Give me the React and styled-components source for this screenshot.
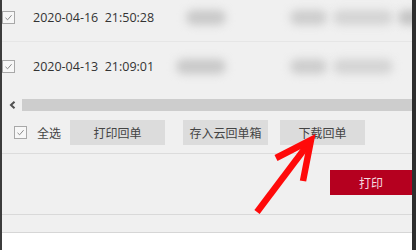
import styled, { createGlobalStyle } from 'styled-components';

const GlobalStyle = createGlobalStyle`
  html, body { margin: 0; padding: 0; background: #ffffff; }
  body { font-family: 'Noto Sans', 'Noto Sans CJK SC', sans-serif; }
`;

const Frame = styled.div`
  position: relative;
  width: 416px;
  height: 250px;
  box-sizing: border-box;
  border-left: 2px solid #3c3c3c;
  border-right: 4px solid #2e2e2e;
  background: #f0f0f0;
  display: flex;
  flex-direction: column;
  overflow: hidden;
`;

const Table = styled.div`
  margin-top: -6px;
  display: flex;
  flex-direction: column;
`;

const Row = styled.div`
  height: 48px;
  display: flex;
  align-items: center;
  border-bottom: ${(p) => (p.$last ? 'none' : '1px solid #e6e6e6')};
  box-sizing: border-box;
`;

const Check = styled.span`
  width: 11px;
  height: 11px;
  border: 1px solid #a8a8a8;
  background: #f7f7f7;
  display: inline-flex;
  align-items: center;
  justify-content: center;
  flex: none;
`;

const DateText = styled.span`
  margin-left: 18px;
  width: 130px;
  font-family: 'Open Sans', sans-serif;
  font-size: 12.5px;
  color: #333;
  white-space: pre;
  flex: none;
`;

const Blob = styled.span`
  display: inline-block;
  height: 15px;
  width: ${(p) => p.$w}px;
  margin-left: ${(p) => p.$ml}px;
  border-radius: 8px;
  background: ${(p) => p.$c || '#c9c9c9'};
  filter: blur(4px);
  flex: none;
`;

const Scrollbar = styled.div`
  margin-top: 9px;
  height: 12px;
  display: flex;
  align-items: center;
`;

const ScrollArrow = styled.span`
  width: 20px;
  height: 12px;
  display: flex;
  align-items: center;
  justify-content: center;
  padding-left: 1px;
  box-sizing: border-box;
`;

const Thumb = styled.span`
  flex: 1;
  height: 12px;
  background: #cdcdcd;
`;

const Toolbar = styled.div`
  margin-top: 9px;
  height: 25px;
  display: flex;
  align-items: center;
  padding-left: 12px;
`;

const SelectAll = styled.label`
  display: flex;
  align-items: center;
  font-family: 'Noto Sans CJK SC', sans-serif;
  font-size: 12px;
  color: #444;
  width: 56px;
  flex: none;
  span + span { margin-left: 10px; }
`;

const Button = styled.button`
  height: 25px;
  width: ${(p) => p.$w}px;
  margin-right: ${(p) => p.$mr || 0}px;
  border: none;
  padding: 0;
  background: #dcdcdc;
  color: #444;
  font-family: 'Noto Sans CJK SC', sans-serif;
  font-size: 12px;
  flex: none;
`;

const Divider = styled.div`
  margin-top: 8px;
  height: 1px;
  background: #dcdcdc;
`;

const Footer = styled.div`
  height: 61px;
  display: flex;
  align-items: flex-start;
  justify-content: flex-end;
  padding-top: 16px;
  box-sizing: border-box;
  border-bottom: 1px solid #d9d9d9;
`;

const PrintButton = styled.button`
  width: 82px;
  height: 25px;
  border: none;
  background: #b5001f;
  color: #f6dde1;
  font-family: 'Noto Sans CJK SC', sans-serif;
  font-size: 12px;
  padding: 0;
`;

const Strip = styled.div`
  height: 17px;
  border-bottom: 1px solid #d6d6d6;
`;

const Blank = styled.div`
  flex: 1;
  background: #ffffff;
`;

const Arrow = styled.svg`
  position: absolute;
  left: 0;
  top: 0;
  pointer-events: none;
`;

const Tick = () => (
  <svg width="9" height="9" viewBox="0 0 9 9">
    <path d="M1.5 4.8 L3.6 6.8 L7.6 2.2" fill="none" stroke="#8a8a8a" strokeWidth="1" />
  </svg>
);

const rows = [
  { date: '2020-04-16  21:50:28', first: { ml: 26, w: 40 } },
  { date: '2020-04-13  21:09:01', first: { ml: 16, w: 50 } },
];

export default function App() {
  return (
    <>
      <GlobalStyle />
      <Frame>
        <Table>
          {rows.map((r, i) => (
            <Row key={r.date} $last={i === rows.length - 1}>
              <Check>
                <Tick />
              </Check>
              <DateText>{r.date}</DateText>
              <Blob $ml={r.first.ml - 3} $w={r.first.w} />
              <Blob $ml={64} $w={37} $c="#cdcdcd" />
              <Blob $ml={6} $w={60} $c="#d4d4d4" />
              {i === 0 && <Blob $ml={5} $w={30} $c="#c4c4c4" />}
            </Row>
          ))}
        </Table>
        <Scrollbar>
          <ScrollArrow>
            <svg width="7" height="8" viewBox="0 0 7 8">
              <path d="M5.5 0.8 L2 4 L5.5 7.2" fill="none" stroke="#505050" strokeWidth="2" />
            </svg>
          </ScrollArrow>
          <Thumb />
        </Scrollbar>
        <Toolbar>
          <SelectAll>
            <Check>
              <Tick />
            </Check>
            <span>全选</span>
          </SelectAll>
          <Button $w={95} $mr={18}>打印回单</Button>
          <Button $w={85} $mr={12}>存入云回单箱</Button>
          <Button $w={85}>下载回单</Button>
        </Toolbar>
        <Divider />
        <Footer>
          <PrintButton>打印</PrintButton>
        </Footer>
        <Strip />
        <Blank />
        <Arrow width="416" height="250" viewBox="0 0 416 250">
          <path d="M255 212 L307 143" stroke="#ff0a0a" strokeWidth="6.5" fill="none" />
          <path d="M274 158 L309 140 L301 181" stroke="#ff0a0a" strokeWidth="6.5" fill="none" strokeLinejoin="miter" />
        </Arrow>
      </Frame>
    </>
  );
}
